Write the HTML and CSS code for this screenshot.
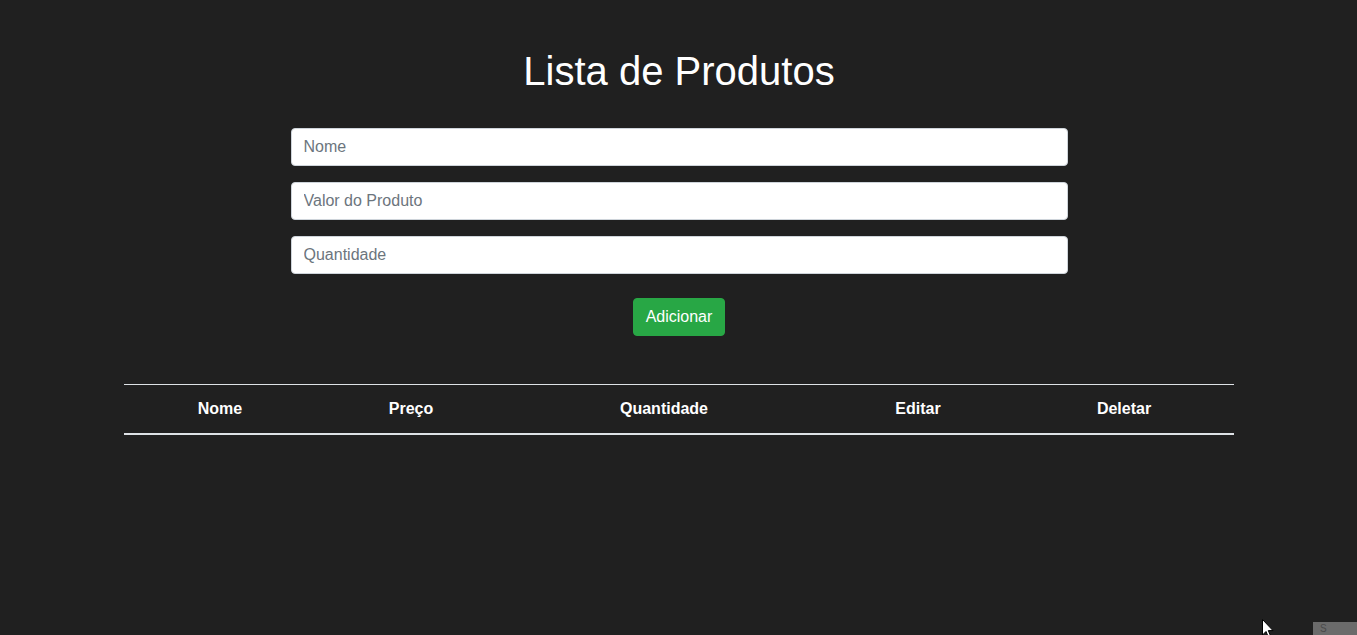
FILE: index.html
```html
<!DOCTYPE html>
<html lang="pt">
<head>
<meta charset="utf-8">
<title>Lista de Produtos</title>
<link rel="stylesheet" href="styles.css">
</head>
<body>
<div class="container">
  <h1 class="title">Lista de Produtos</h1>
  <form class="product-form">
    <input class="field" type="text" placeholder="Nome">
    <input class="field" type="text" placeholder="Valor do Produto">
    <input class="field" type="text" placeholder="Quantidade">
    <div class="actions">
      <button class="btn-add" type="button">Adicionar</button>
    </div>
  </form>
  <table class="products">
    <colgroup>
      <col class="c-nome">
      <col class="c-preco">
      <col class="c-qtd">
      <col class="c-editar">
      <col class="c-deletar">
    </colgroup>
    <thead>
      <tr>
        <th>Nome</th>
        <th>Preço</th>
        <th>Quantidade</th>
        <th>Editar</th>
        <th>Deletar</th>
      </tr>
    </thead>
    <tbody></tbody>
  </table>
</div>
<div class="overlay-box"><span class="overlay-text">S</span></div>
<svg class="cursor" width="13" height="20" viewBox="0 0 13 20" aria-hidden="true">
  <path d="M0.5 0.5 L0.5 16 L4 12.5 L6.5 18.5 L8.8 17.5 L6.3 11.6 L11 11.6 Z" fill="#ffffff" stroke="#000000" stroke-width="1"/>
</svg>
</body>
</html>
```
FILE: styles.css
```css
html, body {
  margin: 0;
  padding: 0;
}
body {
  background: #202020;
  color: #ffffff;
  font-family: "Liberation Sans", Arial, sans-serif;
  font-size: 16px;
  line-height: 24px;
  min-height: 635px;
  overflow: hidden;
}
.container {
  width: 1110px;
  margin: 0 0 0 calc((100% - 1140px) / 2 + 0.5px);
  padding: 47px 15px 0;
}
.title {
  margin: 0;
  font-size: 40px;
  line-height: 48px;
  font-weight: 400;
  text-align: center;
  color: #ffffff;
}
.product-form {
  width: 777px;
  margin: 33px auto 0;
  display: flex;
  flex-direction: column;
  gap: 16px;
}
.field {
  display: block;
  box-sizing: border-box;
  width: 100%;
  height: 38px;
  margin: 0;
  padding: 6px 12px;
  font-family: "Liberation Sans", Arial, sans-serif;
  font-size: 16px;
  line-height: 24px;
  color: #495057;
  background: #ffffff;
  border: 1px solid #ced4da;
  border-radius: 4px;
  outline: none;
}
.field::placeholder {
  color: #6c757d;
  opacity: 1;
}
.actions {
  display: flex;
  justify-content: center;
  margin-top: 8px;
}
.btn-add {
  box-sizing: border-box;
  height: 38px;
  padding: 6px 12px;
  font-family: "Liberation Sans", Arial, sans-serif;
  font-size: 16px;
  line-height: 24px;
  color: #ffffff;
  background: #28a745;
  border: 1px solid #28a745;
  border-radius: 4px;
  cursor: pointer;
}
.products {
  width: 1110px;
  margin-top: 48px;
  border-collapse: collapse;
  table-layout: fixed;
  color: #ffffff;
}
.c-nome { width: 192px; }
.c-preco { width: 190px; }
.c-qtd { width: 316px; }
.c-editar { width: 192px; }
.c-deletar { width: 220px; }
.products th {
  padding: 12px;
  font-weight: 700;
  text-align: center;
  border-top: 1px solid #dee2e6;
  border-bottom: 2px solid #dee2e6;
  line-height: 24px;
}
.overlay-box {
  position: fixed;
  left: 1313px;
  top: 622px;
  width: 44px;
  height: 13px;
  background: #6b6b6b;
  overflow: hidden;
}
.overlay-text {
  position: absolute;
  left: 7px;
  top: 1px;
  font-size: 10px;
  line-height: 11px;
  color: #4a4a4a;
}
.cursor {
  position: fixed;
  left: 1262px;
  top: 619px;
}
```
